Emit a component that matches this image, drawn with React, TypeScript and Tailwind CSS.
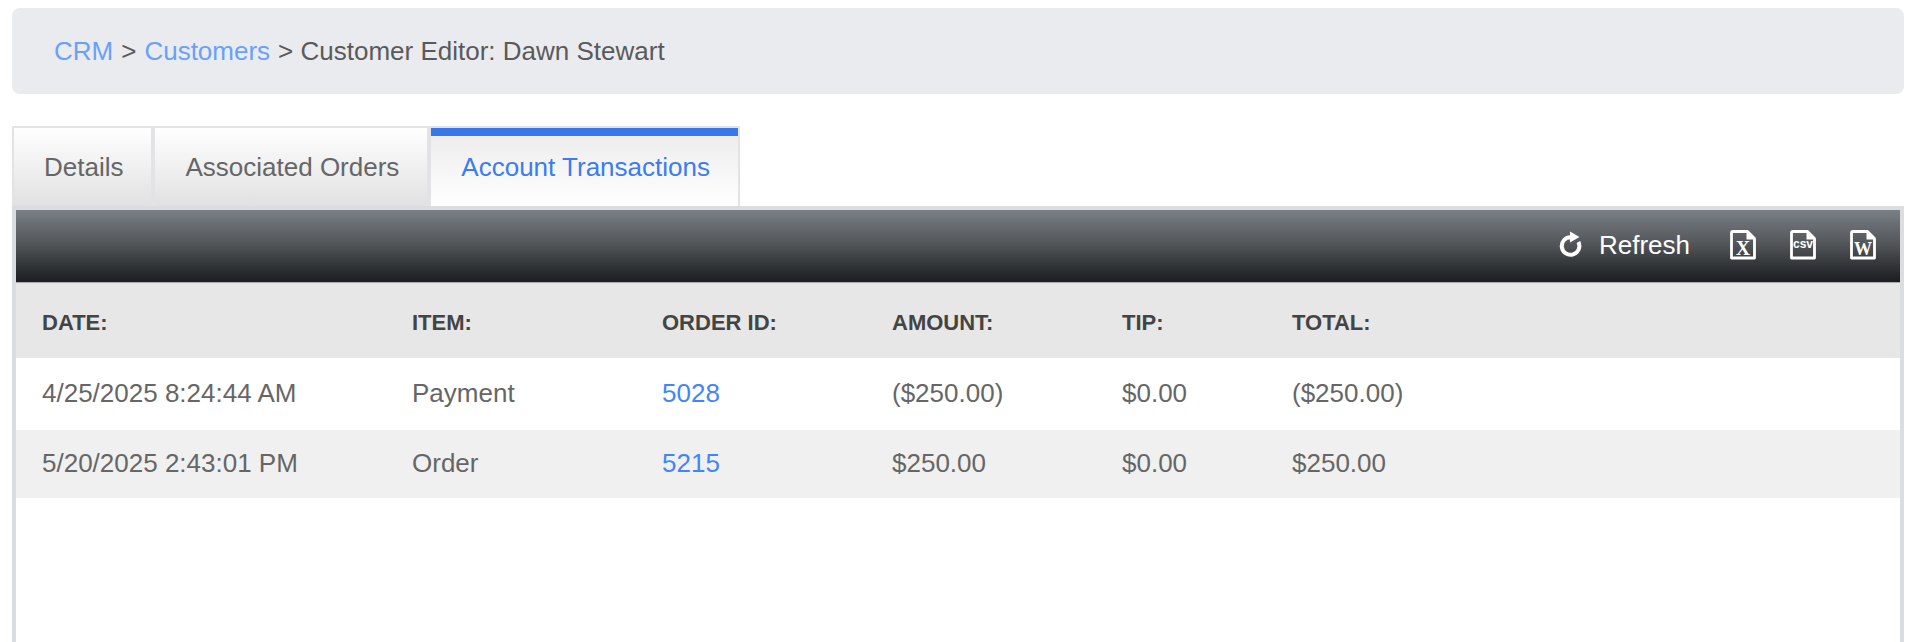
interface Transaction {
  date: string;
  item: string;
  orderId: string;
  amount: string;
  tip: string;
  total: string;
}

const tabs = ['Details', 'Associated Orders', 'Account Transactions'];
const activeTab = 'Account Transactions';

const columns = [
  { label: 'Date:', width: 'w-[396px]' },
  { label: 'Item:', width: 'w-[250px]' },
  { label: 'Order ID:', width: 'w-[230px]' },
  { label: 'Amount:', width: 'w-[230px]' },
  { label: 'Tip:', width: 'w-[170px]' },
  { label: 'Total:', width: '' },
];

const transactions: Transaction[] = [
  { date: '4/25/2025 8:24:44 AM', item: 'Payment', orderId: '5028', amount: '($250.00)', tip: '$0.00', total: '($250.00)' },
  { date: '5/20/2025 2:43:01 PM', item: 'Order', orderId: '5215', amount: '$250.00', tip: '$0.00', total: '$250.00' },
];

const exportTypes = [
  { name: 'Excel', mark: 'X', y: 25, markClass: "font-['Liberation_Serif',serif] text-[20px] font-bold" },
  { name: 'CSV', mark: 'csv', y: 18, markClass: "font-['Liberation_Sans',sans-serif] text-[12px] font-bold" },
  { name: 'Word', mark: 'W', y: 25, markClass: "font-['Liberation_Serif',serif] text-[18px] font-bold" },
];

function RefreshIcon() {
  return (
    <svg width="24" height="28" viewBox="0 0 24 28" fill="none" aria-hidden="true">
      <path d="M12 6.2A8.8 8.8 0 1 0 19.4 11" stroke="white" strokeWidth="4" />
      <path d="M11 0.5V11.5L20.5 6Z" fill="white" />
    </svg>
  );
}

function FileIcon({ mark, y, markClass }: { mark: string; y: number; markClass: string }) {
  return (
    <svg width="26" height="30" viewBox="0 0 26 30" fill="none" aria-hidden="true">
      <path d="M3 1.5H17.5L24.5 8.5V28H1.5V3Q1.5 1.5 3 1.5Z" stroke="white" strokeWidth="2.8" strokeLinejoin="round" />
      <path d="M16.5 1V9.5H25Z" fill="white" />
      <text x="13" y={y} textAnchor="middle" fill="white" className={markClass}>
        {mark}
      </text>
    </svg>
  );
}

function Tab({ label }: { label: string }) {
  const active = label === activeTab;
  return (
    <button
      role="tab"
      aria-selected={active}
      className={`border-2 border-b-0 border-[#e3e3e5] ${
        active
          ? 'bg-linear-to-b from-[#ebebeb] to-white text-[#3b7cf0]'
          : 'bg-linear-to-b from-white to-[#e1e1e1] text-[#666]'
      }`}
    >
      <span
        className={`flex h-full items-center border-t-8 pr-7 pb-2 pl-[30px] ${
          active ? 'border-[#3877e8]' : 'border-transparent'
        }`}
      >
        {label}
      </span>
    </button>
  );
}

function Toolbar() {
  return (
    <div className="flex h-[73px] items-center justify-end border-b border-[#a8aaad] bg-linear-to-b from-[#7b8088] via-[#505356] to-[#1b1d21] pr-6 pb-0.5 text-white">
      <button className="flex items-center gap-4">
        <RefreshIcon />
        Refresh
      </button>
      <div className="ml-10 flex gap-[34px]">
        {exportTypes.map((type) => (
          <button key={type.name} aria-label={`Export to ${type.name}`}>
            <FileIcon mark={type.mark} y={type.y} markClass={type.markClass} />
          </button>
        ))}
      </div>
    </div>
  );
}

export default function App() {
  return (
    <div className="flex min-h-screen flex-col bg-white pt-2 pr-2 pl-3 font-['Liberation_Sans',Arial,sans-serif] text-[26px] leading-8 text-[#666]">
      <nav aria-label="Breadcrumb" className="flex h-[86px] items-center gap-2 rounded-lg bg-[#eaebef] px-[42px] text-[#5a5a5a]">
        <a href="#crm" className="text-[#69a1f8]">CRM</a>
        <span>&gt;</span>
        <a href="#customers" className="text-[#69a1f8]">Customers</a>
        <span>&gt; Customer Editor: Dawn Stewart</span>
      </nav>

      <div role="tablist" className="mt-8 flex h-20">
        {tabs.map((tab) => (
          <Tab key={tab} label={tab} />
        ))}
      </div>

      <main className="grow border-4 border-b-0 border-[#dcdde0]">
        <Toolbar />
        <table className="w-full table-fixed text-left">
          <thead className="bg-[#e7e7e7] text-[22px] text-[#444] uppercase">
            <tr className="h-[75px]">
              {columns.map((col) => (
                <th key={col.label} className={`${col.width} pt-1 font-bold first:pl-[26px]`}>
                  {col.label}
                </th>
              ))}
            </tr>
          </thead>
          <tbody>
            {transactions.map((t) => (
              <tr key={t.orderId} className="h-[72px] even:h-[68px] even:bg-[#f0f0f0] *:pb-0.5">
                <td className="pl-[26px]">{t.date}</td>
                <td>{t.item}</td>
                <td>
                  <a href={`#order-${t.orderId}`} className="text-[#4285fb]">{t.orderId}</a>
                </td>
                <td>{t.amount}</td>
                <td>{t.tip}</td>
                <td>{t.total}</td>
              </tr>
            ))}
          </tbody>
        </table>
      </main>
    </div>
  );
}
